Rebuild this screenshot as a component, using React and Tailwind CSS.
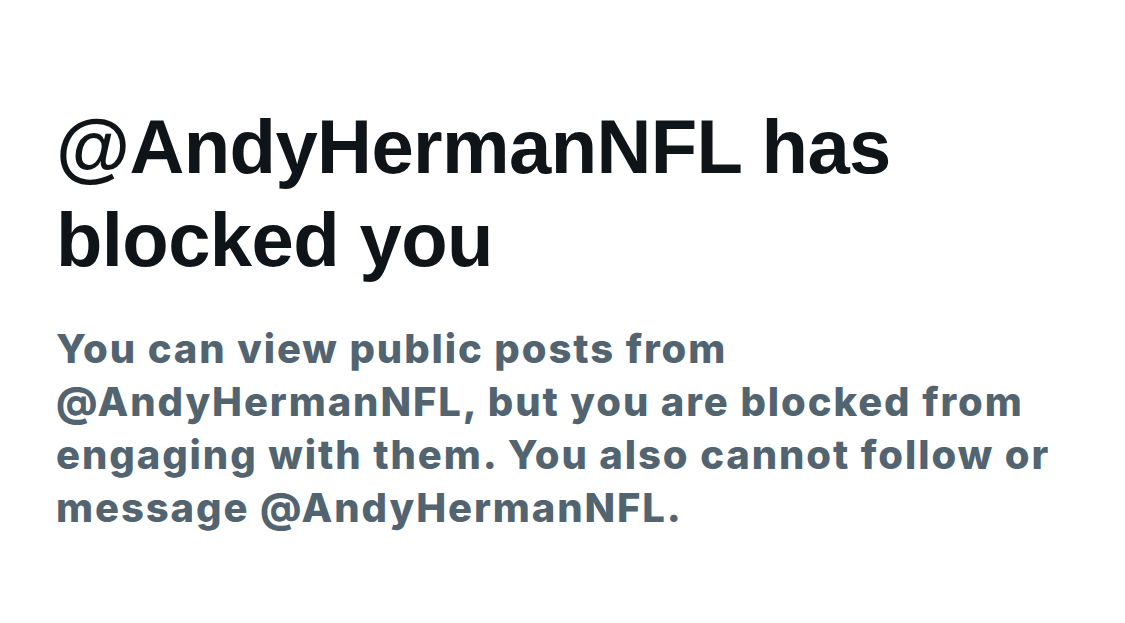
export default function App() {
  return (
    <div className="flex flex-col gap-[36px] bg-white w-[1125px] h-[623px] overflow-hidden pt-[100px] pl-[56px]">
      <h1 className="w-[1000px] font-['Liberation_Sans',Arial,sans-serif] font-bold text-[76px] leading-[93px] tracking-[-0.6px] text-[#0f1419]">
        @AndyHermanNFL has blocked you
      </h1>
      <p className="w-[1064px] font-['Inter',sans-serif] font-extrabold text-[40px] leading-[53px] tracking-[1.9px] text-[#536471]">
        You can view public posts from @AndyHermanNFL, but you are blocked from engaging with them. You also cannot follow or message @AndyHermanNFL.
      </p>
    </div>
  );
}
